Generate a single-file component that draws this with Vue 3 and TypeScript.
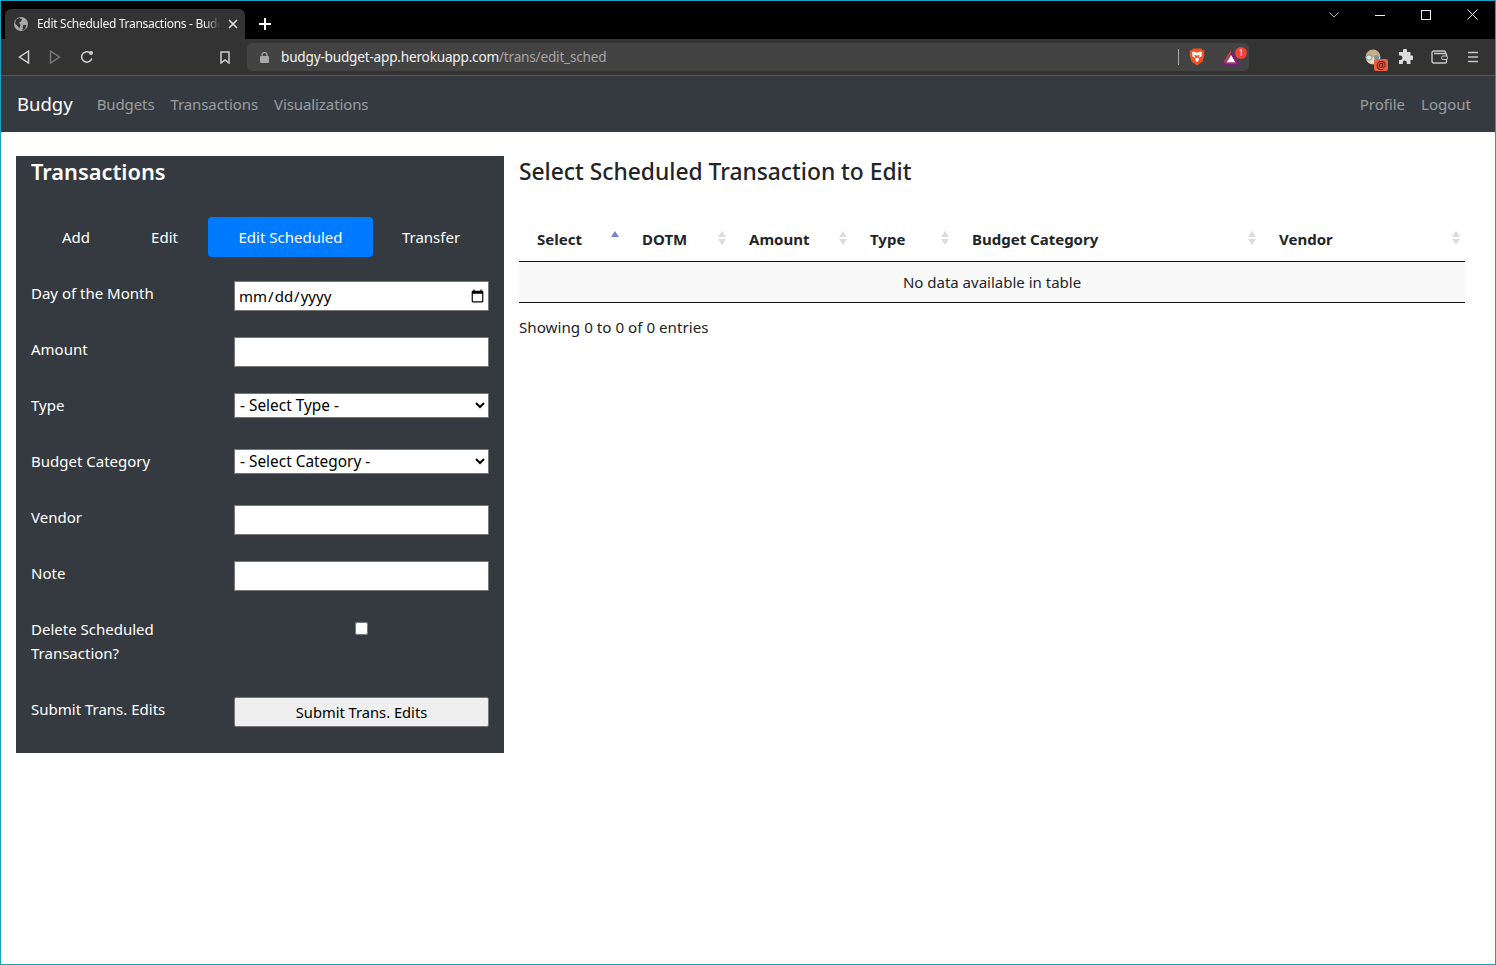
<template>
  <div class="window">
    <div class="titlebar">
      <div class="tab">
        <svg class="globe" viewBox="0 0 16 16" width="16" height="16">
          <circle cx="8" cy="8" r="7" fill="#a9a9a9" />
          <path d="M3 3.500 6.500 2 9 3 8 5.500 6 6.500 7.500 9 6.500 12.500 4.500 10 2 7.500ZM10 9h3.500L12 13l-2.500 1.500Z" fill="#333" />
        </svg>
        <span class="tab-title">Edit Scheduled Transactions - Budgy</span>
        <svg class="tab-close" viewBox="0 0 10 10" width="10" height="10">
          <path d="M1 1 9 9M9 1 1 9" stroke="#e8e8e8" stroke-width="1.500" />
        </svg>
      </div>
      <svg class="new-tab" viewBox="0 0 12 12" width="12" height="12">
        <path d="M6 0V12M0 6H12" stroke="#fff" stroke-width="2" />
      </svg>
      <div class="window-controls">
        <svg viewBox="0 0 10 6" width="10" height="6"><path d="M.5.500 5 5 9.500.500" fill="none" stroke="#bbb" /></svg>
        <svg viewBox="0 0 10 10" width="10" height="10"><path d="M0 5.500H10" stroke="#eee" /></svg>
        <svg viewBox="0 0 10 10" width="10" height="10"><rect x=".5" y=".5" width="9" height="9" fill="none" stroke="#eee" /></svg>
        <svg viewBox="0 0 11 11" width="11" height="11"><path d="M.5.500 10.500 10.500M10.500.500.500 10.500" stroke="#eee" /></svg>
      </div>
    </div>

    <div class="toolbar">
      <div class="nav-buttons">
        <svg viewBox="0 0 12 14" width="12" height="14"><path d="M10.500 1 1.500 7l9 6Z" fill="none" stroke="#d0d0d0" stroke-width="1.500" /></svg>
        <svg viewBox="0 0 12 14" width="12" height="14"><path d="M1.500 1l9 6-9 6Z" fill="none" stroke="#777" stroke-width="1.500" /></svg>
        <svg viewBox="0 0 14 14" width="14" height="14">
          <path d="M11.800 8.500A5.200 5.200 0 1 1 9.500 2.500" fill="none" stroke="#d0d0d0" stroke-width="1.500" />
          <circle cx="11" cy="3" r="2" fill="#d0d0d0" />
        </svg>
      </div>
      <svg class="bookmark" viewBox="0 0 10 13" width="10" height="13">
        <path d="M1 1h8v11L5 9l-4 3Z" fill="none" stroke="#d0d0d0" stroke-width="1.500" />
      </svg>
      <div class="urlbar">
        <svg class="lock" viewBox="0 0 9 11" width="9" height="11">
          <rect y="4" width="9" height="7" rx="1" fill="#a8a8a8" />
          <path d="M2 5V3a2.500 2.500 0 0 1 5 0v2" fill="none" stroke="#a8a8a8" stroke-width="1.200" />
        </svg>
        <span class="url">budgy-budget-app.herokuapp.com<span class="url-path">/trans/edit_sched</span></span>
        <span class="url-sep"></span>
        <svg class="brave" viewBox="0 0 16 18" width="16" height="18">
          <path d="M4 .500h8L13.500 2l2 .5-.5 3 .5 1.500-2 6.500L8 17.500 2.500 13.500.5 7 1 5.500l-.5-3L2.500 2Z" fill="#f4511e" />
          <path d="M5 3.500 6.500 4.500h3L11 3.500l2.200 1L12.500 6.500 13 8l-2.500 1.500L9.800 8.500 11 7.500 9 7 8 8 7 7 5 7.500 6.200 8.500 5.500 9.500 3 8 3.500 6.500 2.800 4.500Z" fill="#fff" />
          <path d="M6 10.500 8 9.500l2 1L9.500 12.500 8 14l-1.500-1.500Z" fill="#fff" />
        </svg>
        <span class="bat">
          <svg viewBox="0 0 18 15" width="18" height="15">
            <path d="M9 0 18 15H0Z" fill="#7a1f7d" />
            <path d="M9 0 1.500 12.500 4 11.500 9 3Z" fill="#e8412d" />
            <path d="M9 5 13.500 12.500H4.500Z" fill="#fff" />
            <path d="M4 12.500H14L15 13.500H3Z" fill="#c63a6e" />
          </svg>
          <span class="bat-badge">1</span>
        </span>
      </div>
      <div class="extensions">
        <span class="avatar">
          <svg viewBox="0 0 16 16" width="16" height="16">
            <circle cx="8" cy="8" r="7.500" fill="#c9ad87" />
            <path d="M1 8a7 7 0 0 0 14 0Z" fill="#e7dcc8" />
            <rect x="1" y="6" width="6" height="5" rx="2.500" fill="#d8e6e6" stroke="#5f8488" stroke-width=".8" />
            <rect x="9" y="6" width="5" height="5" rx="2.500" fill="#6f9aa0" />
          </svg>
          <span class="avatar-badge">@</span>
        </span>
        <svg viewBox="0 0 16 16" width="16" height="16">
          <path d="M6 1.500a2 2 0 0 1 4 0V3h3.500v3.500H15a2.200 2.200 0 0 1 0 4.400h-1.500V15H9.800v-1.500a2 2 0 0 0-4 0V15H2v-4.100h1.300a2.200 2.200 0 0 0 0-4.400H2V3h4Z" fill="#dcdcdc" />
        </svg>
        <svg class="wallet" viewBox="0 0 17 14" width="17" height="14">
          <path d="M14.500 3.500V2a1.200 1.200 0 0 0-1.200-1H3A2 2 0 0 0 1 3v8a2 2 0 0 0 2 2h11.500a1 1 0 0 0 1-1V4.500a1 1 0 0 0-1-1H3" fill="none" stroke="#c8c8c8" stroke-width="1.400" />
          <rect x="10.500" y="6" width="6" height="3.500" rx="1.500" fill="#333" stroke="#c8c8c8" />
        </svg>
        <svg class="menu" viewBox="0 0 10 12" width="10" height="12">
          <path d="M0 1.500H10M0 6H10M0 10.500H10" stroke="#c8c8c8" stroke-width="1.600" />
        </svg>
      </div>
    </div>

    <nav class="navbar">
      <span class="brand">Budgy</span>
      <a v-for="link in leftLinks" :key="link" class="nav-link left">{{ link }}</a>
      <span class="nav-spacer"></span>
      <a v-for="link in rightLinks" :key="link" class="nav-link">{{ link }}</a>
    </nav>

    <main class="content">
      <section class="panel">
        <h3 class="panel-title">Transactions</h3>
        <div class="pills">
          <a
            v-for="tab in tabs"
            :key="tab"
            class="pill"
            :class="{ active: tab === 'Edit Scheduled' }"
          >{{ tab }}</a>
        </div>

        <div class="row">
          <label>Day of the Month</label>
          <input type="date" class="field" />
        </div>
        <div class="row">
          <label>Amount</label>
          <input type="text" class="field" />
        </div>
        <div class="row">
          <label>Type</label>
          <select class="field select"><option>- Select Type -</option></select>
        </div>
        <div class="row">
          <label>Budget Category</label>
          <select class="field select"><option>- Select Category -</option></select>
        </div>
        <div class="row">
          <label>Vendor</label>
          <input type="text" class="field" />
        </div>
        <div class="row">
          <label>Note</label>
          <input type="text" class="field" />
        </div>
        <div class="row row-delete">
          <label>Delete Scheduled Transaction?</label>
          <div class="check-wrap"><input type="checkbox" class="check" /></div>
        </div>
        <div class="row row-last">
          <label>Submit Trans. Edits</label>
          <button class="field submit">Submit Trans. Edits</button>
        </div>
      </section>

      <section class="results">
        <h3 class="results-title">Select Scheduled Transaction to Edit</h3>
        <table class="table">
          <thead>
            <tr>
              <th v-for="(col, i) in columns" :key="col">
                {{ col }}
                <span class="sort" :class="{ sorted: i === 0 }">
                  <i class="up"></i>
                  <i class="down"></i>
                </span>
              </th>
            </tr>
          </thead>
          <tbody>
            <tr>
              <td colspan="6">No data available in table</td>
            </tr>
          </tbody>
        </table>
        <p class="info">Showing 0 to 0 of 0 entries</p>
      </section>
    </main>
  </div>
</template>

<script setup lang="ts">
const leftLinks = ['Budgets', 'Transactions', 'Visualizations']
const rightLinks = ['Profile', 'Logout']
const tabs = ['Add', 'Edit', 'Edit Scheduled', 'Transfer']
const columns = ['Select', 'DOTM', 'Amount', 'Type', 'Budget Category', 'Vendor']
</script>

<style>
html,
body {
  margin: 0;
  background: #fff;
}
</style>

<style scoped>
.window {
  box-sizing: border-box;
  width: 1496px;
  height: 965px;
  border: 1px solid #17a2c4;
  overflow: hidden;
  font-family: "Noto Sans", "Open Sans", sans-serif;
  font-size: 15px;
  line-height: 24px;
  color: #212529;
}

/* browser chrome */
.titlebar {
  display: flex;
  align-items: flex-end;
  height: 38px;
  background: #000;
}
.tab {
  display: flex;
  align-items: center;
  box-sizing: border-box;
  width: 240px;
  height: 30px;
  margin-left: 4px;
  padding: 0 7px 0 8px;
  background: #333;
  border-radius: 6px 6px 0 0;
}
.tab-title {
  flex: 1;
  margin-left: 8px;
  overflow: hidden;
  white-space: nowrap;
  font-size: 12px;
  letter-spacing: -0.3px;
  color: #f2f2f2;
  -webkit-mask-image: linear-gradient(to right, #000 92%, transparent);
  mask-image: linear-gradient(to right, #000 92%, transparent);
}
.tab-close {
  margin-left: 8px;
}
.new-tab {
  margin: 0 0 9px 14px;
}
.window-controls {
  display: flex;
  align-items: center;
  gap: 36px;
  margin: 0 17px 19px auto;
}
.toolbar {
  display: flex;
  align-items: center;
  box-sizing: border-box;
  height: 37px;
  background: #333;
  border-bottom: 1px solid #555;
}
.nav-buttons {
  display: flex;
  align-items: center;
  gap: 19px;
  margin-left: 17px;
}
.bookmark {
  margin-left: 126px;
}
.urlbar {
  display: flex;
  align-items: center;
  box-sizing: border-box;
  width: 1002px;
  height: 28px;
  margin-left: 17px;
  padding-left: 13px;
  background: #434343;
  border-radius: 5px;
}
.url {
  margin-left: 12px;
  font-size: 13.600px;
  letter-spacing: -0.2px;
  color: #f2f2f2;
}
.url-path {
  color: #a5a5a5;
}
.url-sep {
  width: 1px;
  height: 16px;
  margin-left: auto;
  background: #aaa;
}
.brave {
  margin: 0 17px 0 10px;
}
.bat {
  position: relative;
  display: flex;
  width: 18px;
  margin-right: 9px;
}
.bat-badge {
  position: absolute;
  top: -3px;
  right: -7px;
  width: 12px;
  height: 12px;
  border-radius: 50%;
  background: #f44336;
  color: #fff;
  font-size: 8px;
  line-height: 12px;
  text-align: center;
}
.extensions {
  display: flex;
  align-items: center;
  gap: 16px;
  margin-left: 116px;
}
.wallet {
  margin-left: 2px;
}
.menu {
  margin-left: 4px;
}
.avatar {
  position: relative;
  display: flex;
}
.avatar-badge {
  position: absolute;
  right: -7px;
  bottom: -6px;
  width: 14px;
  height: 12px;
  border-radius: 2px;
  background: #e8603f;
  color: #311;
  font-size: 11px;
  line-height: 12px;
  text-align: center;
}

/* app navbar */
.navbar {
  display: flex;
  align-items: center;
  height: 56px;
  padding: 0 16px;
  background: #343a40;
}
.brand {
  margin-right: 16px;
  font-size: 18.500px;
  color: #fff;
}
.nav-link {
  padding: 0 8px;
  color: rgba(255, 255, 255, 0.5);
}
.nav-link.left {
  letter-spacing: -0.1px;
}
.nav-spacer {
  flex: 1;
}

/* page */
.content {
  display: flex;
  align-items: flex-start;
  gap: 15px;
  padding: 24px 30px 0 15px;
}
.panel {
  box-sizing: border-box;
  width: 488px;
  height: 597px;
  padding: 1px 15px 0;
  background: #343a40;
  color: #fff;
}
.panel-title {
  margin: 0 0 30px;
  font-size: 21.800px;
  font-weight: 600;
  line-height: 30px;
}
.pills {
  display: flex;
  margin-bottom: 24px;
}
.pill {
  box-sizing: border-box;
  height: 40px;
  padding: 8px 0;
  border-radius: 4px;
  text-align: center;
}
.pill:nth-child(1) { width: 90px; }
.pill:nth-child(2) { width: 87px; }
.pill:nth-child(3) { width: 165px; }
.pill:nth-child(4) { width: 116px; }
.pill.active {
  background: #007bff;
}
.row {
  display: flex;
  align-items: flex-start;
  min-height: 30px;
  margin-bottom: 26px;
}
.row label {
  box-sizing: border-box;
  width: 203px;
  padding-right: 40px;
}
.field {
  box-sizing: border-box;
  width: 255px;
  height: 30px;
  margin: 0;
  padding: 1px 1px 1px 3px;
  border: 1px solid #767676;
  border-radius: 0;
  background: #fff;
  font: inherit;
  color: #000;
}
.select {
  height: 25px;
  padding: 0 0 0 1px;
  font-size: 15.400px;
}
.check-wrap {
  display: flex;
  justify-content: center;
  width: 255px;
}
.check {
  width: 13px;
  height: 13px;
  margin: 5px 0 0;
}
.row-delete {
  margin-bottom: 32px;
}
.row-last {
  margin-bottom: 0;
}
.submit {
  padding: 1px 6px;
  border-radius: 2px;
  background: #efefef;
  font-size: 14.700px;
}

.results {
  width: 946px;
  padding-top: 1px;
}
.results-title {
  margin: 0 0 30px;
  font-size: 22.800px;
  font-weight: 500;
  line-height: 30px;
}
.table {
  width: 946px;
  table-layout: fixed;
  border-collapse: collapse;
}
.table th {
  position: relative;
  box-sizing: border-box;
  height: 44px;
  padding: 1px 18px 0;
  border-bottom: 1px solid #111;
  font-weight: 700;
  text-align: left;
}
.table th:nth-child(1) { width: 105px; }
.table th:nth-child(2) { width: 107px; }
.table th:nth-child(3) { width: 121px; }
.table th:nth-child(4) { width: 102px; }
.table th:nth-child(5) { width: 307px; }
.table th:nth-child(6) { width: 204px; }
.table td {
  height: 40px;
  padding: 0;
  border-bottom: 1px solid #111;
  background: #f9f9f9;
  text-align: center;
}
.sort {
  position: absolute;
  top: 14px;
  right: 4px;
  width: 9px;
}
.sort i {
  display: block;
  width: 0;
  height: 0;
  border-left: 4.500px solid transparent;
  border-right: 4.500px solid transparent;
}
.sort .up {
  margin-bottom: 2px;
  border-bottom: 6px solid #dcdcdc;
}
.sort .down {
  border-top: 6px solid #dcdcdc;
}
.sort.sorted .up {
  border-bottom-color: #7a80d8;
}
.sort.sorted .down {
  border-top-color: transparent;
}
.info {
  margin: 12px 0 0;
  font-size: 15.200px;
}
</style>
